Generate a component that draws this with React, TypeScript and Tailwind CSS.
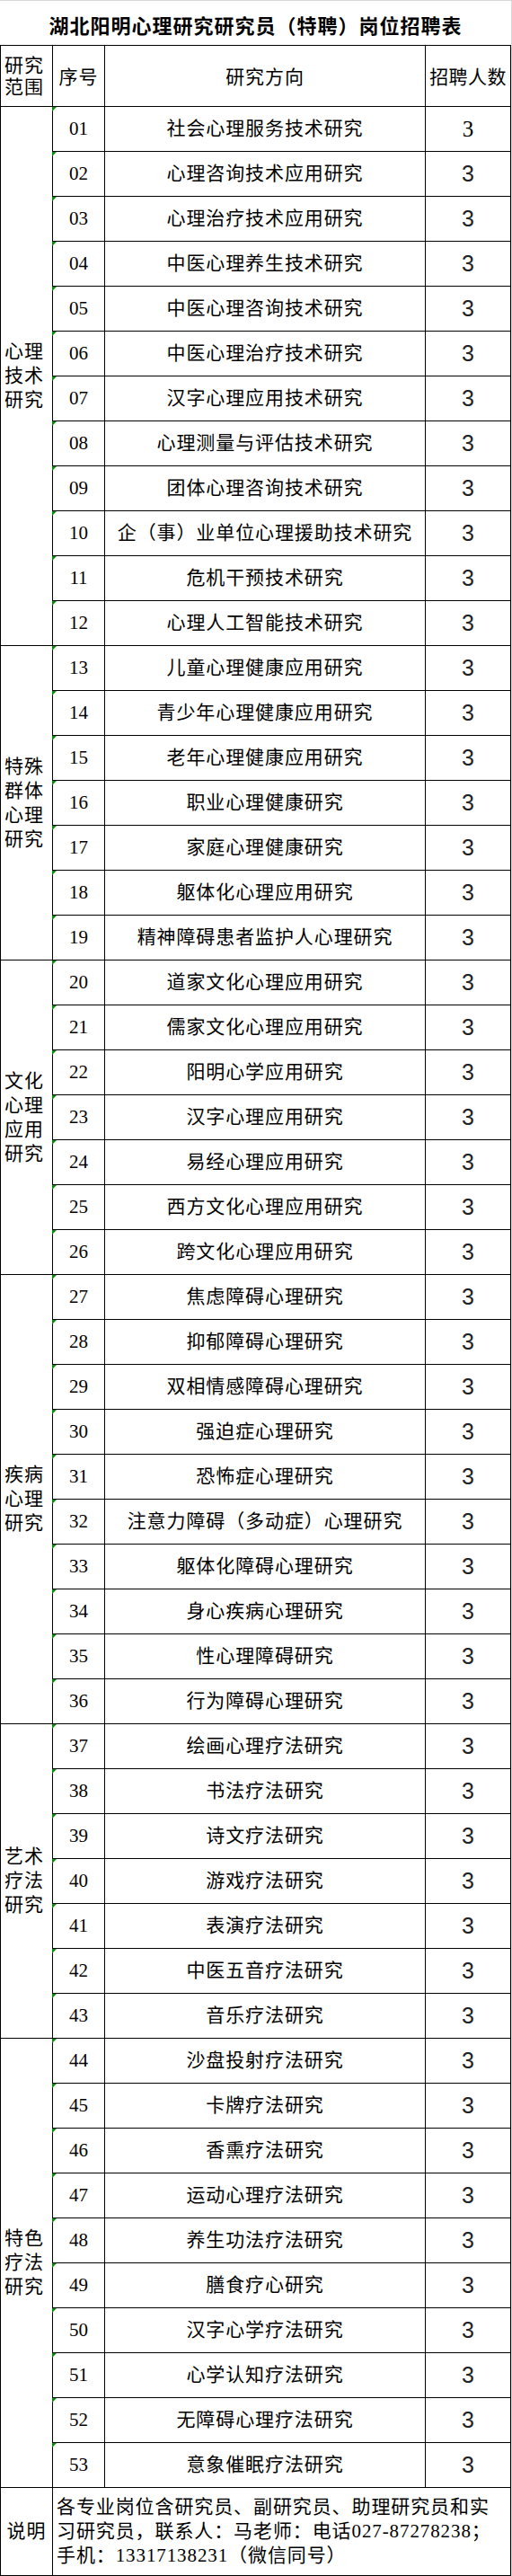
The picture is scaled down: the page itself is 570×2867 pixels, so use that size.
import React from "react";

type Group = { label: string[]; span: string; items: string[] };

const groups: Group[] = [
  {
    label: ["心理", "技术", "研究"],
    span: "row-span-12",
    items: [
      "社会心理服务技术研究",
      "心理咨询技术应用研究",
      "心理治疗技术应用研究",
      "中医心理养生技术研究",
      "中医心理咨询技术研究",
      "中医心理治疗技术研究",
      "汉字心理应用技术研究",
      "心理测量与评估技术研究",
      "团体心理咨询技术研究",
      "企（事）业单位心理援助技术研究",
      "危机干预技术研究",
      "心理人工智能技术研究",
    ],
  },
  {
    label: ["特殊", "群体", "心理", "研究"],
    span: "row-span-7",
    items: [
      "儿童心理健康应用研究",
      "青少年心理健康应用研究",
      "老年心理健康应用研究",
      "职业心理健康研究",
      "家庭心理健康研究",
      "躯体化心理应用研究",
      "精神障碍患者监护人心理研究",
    ],
  },
  {
    label: ["文化", "心理", "应用", "研究"],
    span: "row-span-7",
    items: [
      "道家文化心理应用研究",
      "儒家文化心理应用研究",
      "阳明心学应用研究",
      "汉字心理应用研究",
      "易经心理应用研究",
      "西方文化心理应用研究",
      "跨文化心理应用研究",
    ],
  },
  {
    label: ["疾病", "心理", "研究"],
    span: "row-span-10",
    items: [
      "焦虑障碍心理研究",
      "抑郁障碍心理研究",
      "双相情感障碍心理研究",
      "强迫症心理研究",
      "恐怖症心理研究",
      "注意力障碍（多动症）心理研究",
      "躯体化障碍心理研究",
      "身心疾病心理研究",
      "性心理障碍研究",
      "行为障碍心理研究",
    ],
  },
  {
    label: ["艺术", "疗法", "研究"],
    span: "row-span-7",
    items: [
      "绘画心理疗法研究",
      "书法疗法研究",
      "诗文疗法研究",
      "游戏疗法研究",
      "表演疗法研究",
      "中医五音疗法研究",
      "音乐疗法研究",
    ],
  },
  {
    label: ["特色", "疗法", "研究"],
    span: "row-span-10",
    items: [
      "沙盘投射疗法研究",
      "卡牌疗法研究",
      "香熏疗法研究",
      "运动心理疗法研究",
      "养生功法疗法研究",
      "膳食疗心研究",
      "汉字心学疗法研究",
      "心学认知疗法研究",
      "无障碍心理疗法研究",
      "意象催眠疗法研究",
    ],
  },
];

const cell = "border-r border-b border-black";

export default function App() {
  let n = 0;
  return (
    <div className="w-[570px] border-t border-r border-[#d6d6d6] bg-white text-black font-['Liberation_Serif','Noto_Sans_CJK_SC',serif]">
      <div className="flex h-[49px] items-center justify-center pt-[4px] font-['Noto_Sans_CJK_SC',sans-serif] text-[22px] font-bold tracking-[1px]">
        湖北阳明心理研究研究员（特聘）岗位招聘表
      </div>

      <div className="grid w-[569px] grid-cols-[58px_58px_357px_95px] grid-rows-[68px_repeat(53,50px)_98px] border-t border-l border-black text-[21px] tracking-[0.9px]">
        {/* header */}
        <div className={`${cell} flex flex-col justify-center pl-[4px] leading-[24px]`}>
          <span>研究</span>
          <span>范围</span>
        </div>
        <div className={`${cell} flex items-center justify-center pt-[4px]`}>序号</div>
        <div className={`${cell} flex items-center justify-center pt-[4px]`}>研究方向</div>
        <div className={`${cell} flex items-center justify-center pt-[4px] tracking-[0.4px]`}>招聘人数</div>

        {groups.map((g) => (
          <React.Fragment key={g.label.join("")}>
            <div className={`${cell} ${g.span} col-start-1 flex flex-col justify-center pl-[4px] leading-[27px]`}>
              {g.label.map((l) => (
                <span key={l}>{l}</span>
              ))}
            </div>
            {g.items.map((item) => {
              n += 1;
              const no = String(n).padStart(2, "0");
              return (
                <React.Fragment key={no}>
                  <div className={`${cell} relative col-start-2 flex items-center justify-center tracking-normal`}>
                    <span className="absolute -left-px top-0 h-0 w-0 border-t-[5px] border-r-[5px] border-t-[#0a8a0a] border-r-transparent" />
                    {no}
                  </div>
                  <div className={`${cell} col-start-3 flex items-center justify-center`}>{item}</div>
                  <div
                    className={`${cell} col-start-4 flex items-center justify-center tracking-normal ${
                      n === 1
                        ? "font-['Liberation_Serif',serif] text-[25px]"
                        : "font-['Liberation_Sans',Arial,sans-serif] text-[25px] text-[#222]"
                    }`}
                  >
                    3
                  </div>
                </React.Fragment>
              );
            })}
          </React.Fragment>
        ))}

        {/* footnote */}
        <div className={`${cell} col-start-1 flex items-center justify-center`}>说明</div>
        <div className={`${cell} col-span-3 col-start-2 flex flex-col justify-center pl-[4px] leading-[27px]`}>
          <span>各专业岗位含研究员、副研究员、助理研究员和实</span>
          <span>习研究员，联系人：马老师：电话027-87278238；</span>
          <span>手机：13317138231（微信同号）</span>
        </div>
      </div>
    </div>
  );
}
